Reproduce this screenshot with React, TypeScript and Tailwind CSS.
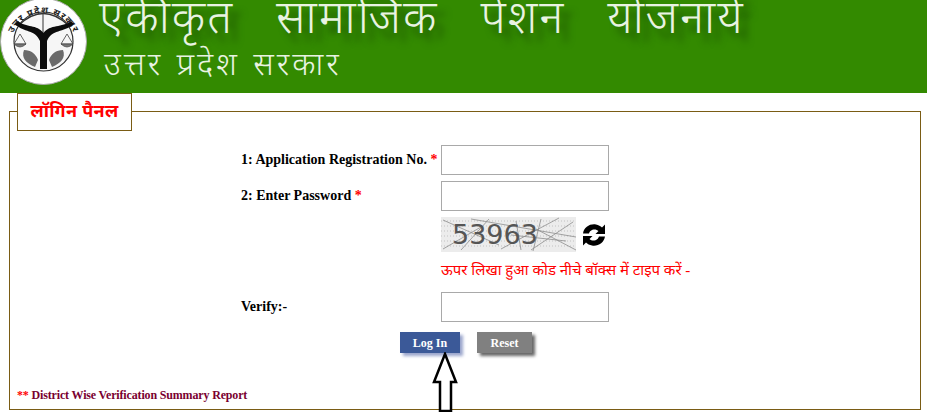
import React from "react";

const serif = "font-['Liberation_Serif','Noto_Sans_Devanagari','Noto_Sans',serif]";

function Seal() {
  return (
    <svg width="90" height="86" viewBox="0 0 90 86" className="shrink-0">
      <circle cx="43.500" cy="41.500" r="43" fill="#fff" stroke="#aaa" strokeWidth="1" />
      <circle cx="43.500" cy="41.500" r="29.500" fill="#f6f6f6" stroke="#333" strokeWidth="1.2" />
      <defs>
        <path id="sealRing" d="M11 52 A33 33 0 1 1 76 52" />
      </defs>
      <text fontSize="9" fontWeight="700" fill="#222" letterSpacing="1.2" className="font-['Noto_Sans','Noto_Sans_Devanagari',sans-serif]">
        <textPath href="#sealRing" startOffset="50%" textAnchor="middle">उत्तर प्रदेश सरकार</textPath>
      </text>
      <path d="M19 25 Q43 2 68 25" fill="none" stroke="#333" strokeWidth="1.300" />
      <path d="M19 25 L43 36 L68 25" fill="none" stroke="#555" strokeWidth="0.7" />
      <path d="M43 13 V36" stroke="#333" strokeWidth="1" />
      <path d="M15 24 C24 33 35 29 40 41 L40 69 L47 69 L47 41 C52 29 63 33 74 24 L71 21 C62 28 50 24 43.500 33 C37 24 26 28 18 21 Z" fill="#0c0c0c" />
      <path d="M20 34 L14 44 H26 Z M67 34 L61 44 H73 Z" fill="none" stroke="#555" strokeWidth="0.9" />
      <path d="M14 44 Q20 50 26 44 Z M61 44 Q67 50 73 44 Z" fill="#777" stroke="#444" strokeWidth="0.7" />
      <path d="M24 50 C21 58 26 63 35 67 L38 60 C36 54 31 50 24 50 Z M63 50 C66 58 61 63 52 67 L49 60 C51 54 56 50 63 50 Z" fill="#6a6a6a" />
    </svg>
  );
}

function Captcha() {
  return (
    <div className="relative w-[135px] h-[35px] bg-[#ececec] overflow-hidden">
      <svg width="135" height="35" viewBox="0 0 135 35" className="absolute inset-0">
        <g stroke="#c2c2c2" strokeWidth="1" strokeDasharray="1 2">
          <path d="M0 4 H135 M0 9 H135 M0 14 H135 M0 19 H135 M0 24 H135 M0 29 H135" />
        </g>
        <g stroke="#8d8d8d" strokeWidth="0.8">
          <path d="M2 3 L58 28 M30 2 L135 20 M118 1 L60 32 M75 4 L80 33 M90 33 L132 5 M95 12 L135 33 M70 18 L125 24 M2 32 L40 10 M48 2 L20 33 M100 2 L92 34" />
        </g>
      </svg>
      <span className="absolute left-[11px] top-[1px] text-[27px] leading-[34px] font-normal text-[#555555] font-['DejaVu_Sans',sans-serif]">53963</span>
    </div>
  );
}

function Field() {
  return <input className="block w-[168px] h-[30px] border border-[#a9a9a9] bg-white" />;
}

export default function App() {
  return (
    <div className={`w-[927px] h-[412px] overflow-hidden bg-white ${serif}`}>
      <header className="h-[93px] bg-[#338a00] flex items-start overflow-hidden">
        <Seal />
        <div className="pl-[9px] flex flex-col text-[#e9f3e2] font-['Noto_Sans','Noto_Sans_Devanagari',sans-serif]">
          <div className="text-[46px] leading-[30px] font-light tracking-[2px] whitespace-pre [text-shadow:8px_9px_7px_#1f5a00]">एकीकृत   सामाजिक   पेंशन   योजनायें</div>
          <div className="mt-[17px] pl-[5px] text-[32px] leading-[32px] font-light tracking-[3px] [word-spacing:2px] whitespace-pre">उत्तर प्रदेश सरकार</div>
        </div>
      </header>

      <fieldset className="relative ml-[9px] mt-[18px] w-[912px] h-[299px] border border-[#7a5c14] px-0">
        <legend className="absolute left-[7px] -top-[19px] w-[115px] h-[38px] border border-[#7a5c14] bg-white text-center text-[18px] leading-[35px] tracking-[0.3px] font-bold text-[#ff0000]">लॉगिन पैनल</legend>

        <div className="pl-[231px] pt-[33px] flex flex-col text-[14px] font-bold text-black">
          <div className="flex items-start h-[36px]">
            <label className="w-[200px] leading-[30px]">1: Application Registration No. <span className="text-[#ff0000]">*</span></label>
            <Field />
          </div>
          <div className="flex items-start h-[36px]">
            <label className="w-[200px] leading-[30px]">2: Enter Password <span className="text-[#ff0000]">*</span></label>
            <Field />
          </div>
          <div className="flex items-center pl-[200px] h-[35px]">
            <Captcha />
            <svg width="24" height="24" viewBox="0 0 24 24" className="ml-[6px]">
              <path d="M1 10.500 C2 4 8 0.500 14 1.500 C16.500 2 18.500 3 20 4.500 L23 1.500 V11 H13.500 L16.500 8 C15 6.500 12.500 6 10.500 6.800 C8.500 7.500 7.500 9 7 10.500 Z" fill="#000" />
              <path d="M23 13.500 C22 20 16 23.500 10 22.500 C7.500 22 5.500 21 4 19.500 L1 22.500 V13 H10.500 L7.500 16 C9 17.500 11.500 18 13.500 17.200 C15.500 16.500 16.500 15 17 13.500 Z" fill="#000" />
            </svg>
          </div>
          <div className="pl-[200px] mt-[6px] h-[24px] text-[15px] leading-[24px] font-normal tracking-[0.03px] text-[#ff0000] whitespace-nowrap">ऊपर लिखा हुआ कोड नीचे बॉक्स में टाइप करें -</div>
          <div className="flex items-start mt-[10px] h-[30px]">
            <label className="w-[200px] leading-[30px]">Verify:-</label>
            <Field />
          </div>
        </div>

        <div className="flex gap-[17px] pl-[390px] mt-[10px]">
          <button className="w-[60px] h-[21px] bg-[#3b5998] text-white text-[12px] font-bold shadow-[3px_3px_3px_#9aa5cc]">Log In</button>
          <button className="w-[55px] h-[21px] bg-[#808080] text-white text-[12px] font-bold shadow-[3px_3px_3px_#666]">Reset</button>
        </div>

        <div className="absolute left-[7px] bottom-[5px] text-[12px] tracking-[-0.16px] font-bold text-[#7a0030]"><span className="text-[#ff0000]">** </span>District Wise Verification Summary Report</div>

        <svg width="28" height="62" viewBox="0 0 28 62" className="absolute left-[422px] top-[240px]">
          <path d="M13 2 L24 30 H19 V59 H8 V30 H2 Z" fill="#fff" stroke="#000" strokeWidth="2.5" />
        </svg>
      </fieldset>
    </div>
  );
}
